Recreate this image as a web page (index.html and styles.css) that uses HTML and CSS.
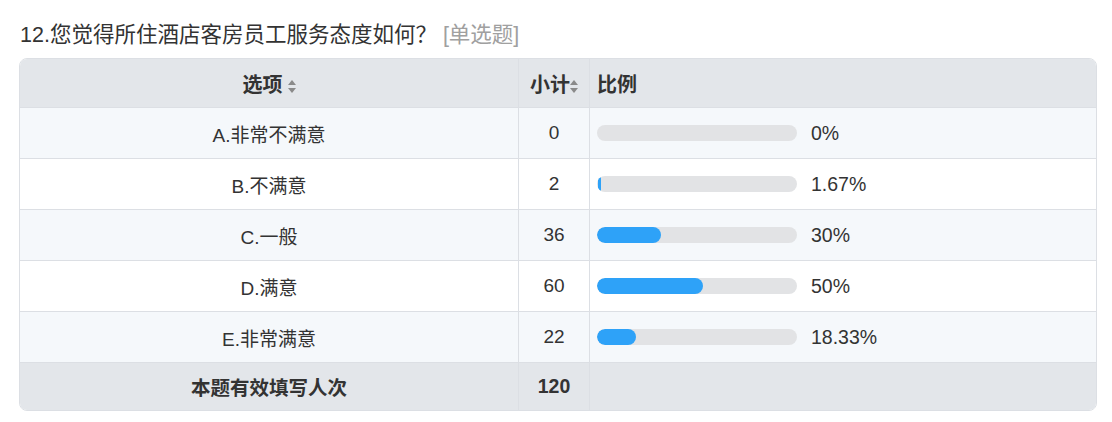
FILE: index.html
```html
<!DOCTYPE html>
<html lang="zh-CN">
<head>
    <meta charset="utf-8">
    <title>12.您觉得所住酒店客房员工服务态度如何？</title>
    <link rel="stylesheet" href="styles.css">
</head>
<body>
    <div class="question">
        <div class="question-title">12.您觉得所住酒店客房员工服务态度如何？ <span class="question-type">[单选题]</span></div>
        <div class="result-box">
            <table class="result-table">
                <thead>
                    <tr>
                        <th class="col-option">选项<span class="sort"></span></th>
                        <th class="col-count">小计<span class="sort"></span></th>
                        <th class="col-ratio">比例</th>
                    </tr>
                </thead>
                <tbody>
                    <tr class="odd">
                        <td class="col-option">A.非常不满意</td>
                        <td class="col-count">0</td>
                        <td class="col-ratio"><div class="bar"><div class="bar-fill" style="width: 0px"></div></div><span class="pct">0%</span></td>
                    </tr>
                    <tr>
                        <td class="col-option">B.不满意</td>
                        <td class="col-count">2</td>
                        <td class="col-ratio"><div class="bar"><div class="bar-fill thin" style="width: 3px"></div></div><span class="pct">1.67%</span></td>
                    </tr>
                    <tr class="odd">
                        <td class="col-option">C.一般</td>
                        <td class="col-count">36</td>
                        <td class="col-ratio"><div class="bar"><div class="bar-fill" style="width: 64px"></div></div><span class="pct">30%</span></td>
                    </tr>
                    <tr>
                        <td class="col-option">D.满意</td>
                        <td class="col-count">60</td>
                        <td class="col-ratio"><div class="bar"><div class="bar-fill" style="width: 106px"></div></div><span class="pct">50%</span></td>
                    </tr>
                    <tr class="odd">
                        <td class="col-option">E.非常满意</td>
                        <td class="col-count">22</td>
                        <td class="col-ratio"><div class="bar"><div class="bar-fill" style="width: 39px"></div></div><span class="pct">18.33%</span></td>
                    </tr>
                </tbody>
                <tfoot>
                    <tr>
                        <td class="col-option">本题有效填写人次</td>
                        <td class="col-count">120</td>
                        <td class="col-ratio"></td>
                    </tr>
                </tfoot>
            </table>
        </div>
    </div>
</body>
</html>
```

FILE: styles.css
```css
html,body{
    margin: 0;
    background-color: white;
}

.question{
    padding: 22px 15px 0 19px;
    font-family: "Liberation Sans", "Noto Sans CJK SC", sans-serif;
    color: #333;
}
.question .question-title{
    font-size: 21.5px;
    line-height: 26px;
    margin-bottom: 10px;
    padding-left: 1px;
}
.question .question-type{
    color: #a0a0a0;
}

.result-box{
    border: 1px solid #dcdfe4;
    border-radius: 8px;
    overflow: hidden;
}
.result-table{
    width: 100%;
    border-collapse: separate;
    border-spacing: 0;
    font-size: 19px;
}
.result-table th,
.result-table td{
    border-right: 1px solid #dcdfe4;
    border-bottom: 1px solid #dcdfe4;
    padding: 0 7px;
    font-weight: normal;
}
.result-table th:last-child,
.result-table td:last-child{
    border-right: none;
}
.result-table tfoot td{
    border-bottom: none;
}

.result-table thead th{
    height: 48px;
    background-color: #e3e6ea;
    font-weight: bold;
    font-size: 20px;
}
.result-table tbody td{
    height: 50px;
}
.result-table tbody tr.odd td{
    background-color: #f5f8fb;
}
.result-table tfoot td{
    height: 47px;
    background-color: #e3e6ea;
    font-weight: bold;
    font-size: 19.5px;
}

.result-table .col-option{
    width: 484px;
    text-align: center;
}
.result-table .col-count{
    width: 56px;
    text-align: center;
}
.result-table .col-ratio{
    text-align: left;
}

.sort{
    display: inline-block;
    position: relative;
    width: 8px;
    height: 13px;
    margin-left: 5px;
    vertical-align: -1px;
}
.sort::before,
.sort::after{
    content: "";
    position: absolute;
    left: 0;
    border-left: 4px solid transparent;
    border-right: 4px solid transparent;
}
.sort::before{
    top: 0;
    border-bottom: 5.5px solid #8a8a8a;
}
.sort::after{
    bottom: 0;
    border-top: 5.5px solid #8a8a8a;
}
.col-count .sort{
    margin-left: 0;
}

.bar{
    display: inline-block;
    vertical-align: middle;
    width: 200px;
    height: 16px;
    border-radius: 8px;
    background-color: #e2e3e5;
    overflow: hidden;
}
.bar-fill{
    height: 100%;
    border-radius: 8px;
    background-color: #2ea2f8;
}
.bar-fill.thin{
    height: 14px;
    margin-top: 1px;
    margin-left: 1px;
    border-radius: 1px;
}
.pct{
    display: inline-block;
    vertical-align: middle;
    margin-left: 14px;
    font-size: 19.5px;
}
```
